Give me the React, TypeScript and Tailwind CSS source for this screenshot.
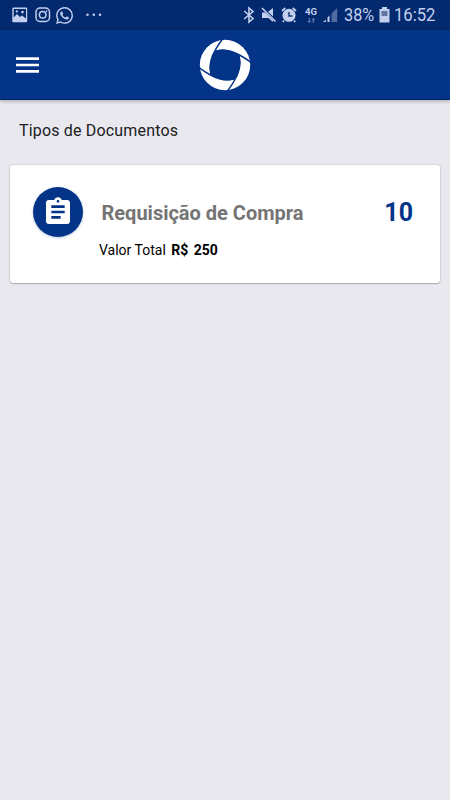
import React from "react";

function StatusBar() {
  return (
    <div className="flex h-[30px] items-center bg-[#032a6f] pl-[12px] text-[#c3cfee]">
      <svg className="h-[16px] w-[16px]" viewBox="0 0 16 16">
        <path fill="currentColor" fillRule="evenodd" d="M1.500 .5H14a1.200 1.200 0 0 1 1.200 1.200V14a1.200 1.200 0 0 1-1.200 1.200H1.500A1.200 1.200 0 0 1 .3 14V1.700A1.200 1.200 0 0 1 1.500.5ZM1.700 2v8.500l3.300-3.500 3 3 2-1.500 4 3V2ZM4.800 3.300a1.100 1.100 0 1 1 0 2.200a1.100 1.100 0 0 1 0-2.200ZM10.500 3.800a1.300 1.300 0 1 1 0 2.600a1.300 1.300 0 0 1 0-2.600Z" />
      </svg>
      <svg className="ml-[7px] h-[16px] w-[16px]" viewBox="0 0 16 16" fill="none" stroke="currentColor" strokeWidth="1.500">
        <rect x="1" y="1" width="13.500" height="13.500" rx="4" />
        <circle cx="7.700" cy="7.800" r="3.300" />
        <circle cx="11.600" cy="4" r=".5" fill="currentColor" strokeWidth=".8" />
      </svg>
      <svg className="ml-[5px] h-[17px] w-[17px]" viewBox="0 0 24 24" fill="currentColor">
        <path d="M17.472 14.382c-.297-.149-1.758-.867-2.030-.967-.273-.099-.471-.148-.670.150-.197.297-.767.966-.940 1.164-.173.199-.347.223-.644.075-.297-.150-1.255-.463-2.390-1.475-.883-.788-1.480-1.761-1.653-2.059-.173-.297-.018-.458.130-.606.134-.133.298-.347.446-.520.149-.174.198-.298.298-.497.099-.198.050-.371-.025-.520-.075-.149-.669-1.612-.916-2.207-.242-.579-.487-.500-.669-.510-.173-.008-.371-.010-.570-.010-.198 0-.520.074-.792.372-.272.297-1.040 1.016-1.040 2.479 0 1.462 1.065 2.875 1.213 3.074.149.198 2.096 3.200 5.077 4.487.709.306 1.262.489 1.694.625.712.227 1.360.195 1.871.118.571-.085 1.758-.719 2.006-1.413.248-.694.248-1.289.173-1.413-.074-.124-.272-.198-.570-.347m-5.421 7.403h-.004a9.870 9.870 0 0 1-5.031-1.378l-.361-.214-3.741.982.998-3.648-.235-.374a9.860 9.860 0 0 1-1.510-5.260c.001-5.450 4.436-9.884 9.888-9.884 2.640 0 5.122 1.030 6.988 2.898a9.825 9.825 0 0 1 2.893 6.994c-.003 5.450-4.437 9.884-9.885 9.884m8.413-18.297A11.815 11.815 0 0 0 12.050 0C5.495 0 .160 5.335.157 11.892c0 2.096.547 4.142 1.588 5.945L.057 24l6.305-1.654a11.882 11.882 0 0 0 5.683 1.448h.005c6.554 0 11.890-5.335 11.893-11.893a11.821 11.821 0 0 0-3.480-8.413Z" />
      </svg>
      <svg className="ml-[12px] h-[4px] w-[18px]" viewBox="0 0 18 4" fill="currentColor">
        <circle cx="2.500" cy="1.800" r="1.250" /><circle cx="8.800" cy="1.800" r="1.250" /><circle cx="15" cy="1.800" r="1.250" />
      </svg>
      <svg className="ml-[140px] h-[18px] w-[12px]" viewBox="0 0 12 18" fill="none" stroke="currentColor" strokeWidth="1.600">
        <path d="M1.200 5 10 12.500 6 16V2l4 3.500L1.200 13" />
      </svg>
      <svg className="ml-[6px] h-[16px] w-[16px]" viewBox="0 0 16 16" fill="currentColor">
        <path d="M1 5.500h3l8 7.500v2L7.500 11H1ZM12 1v8.500L7.200 4.800Z" />
        <path d="M1 1 14.500 14.500" stroke="currentColor" strokeWidth="1.600" />
      </svg>
      <svg className="ml-[4px] h-[16px] w-[16px]" viewBox="0 0 16 16">
        <circle cx="8" cy="8.300" r="6.500" fill="currentColor" />
        <path d="M1 4 4.300 1M15 4 11.700 1M3 13.500 1.800 15M13 13.500 14.200 15" stroke="currentColor" strokeWidth="1.700" />
        <path d="M8 5v4h3.500" fill="none" stroke="#173a78" strokeWidth="1.500" />
      </svg>
      <div className="ml-[8px] flex h-[15px] w-[13px] flex-col font-['Roboto',sans-serif]">
        <span className="text-[9.500px] leading-[8px] font-bold">4G</span>
        <svg className="mt-[2px] ml-[2px] h-[5px] w-[9px] text-[#7186b5]" viewBox="0 0 9 5" fill="none" stroke="currentColor" strokeWidth="1">
          <path d="M2.300 0v4.500M.8 3l1.500 1.500L3.800 3M6.300 5V.6M4.800 2 6.300.6 7.800 2" />
        </svg>
      </div>
      <svg className="ml-[4px] h-[16px] w-[16px]" viewBox="0 0 16 16">
        <path d="M1 15 3.800 12.500V15ZM5.500 10.500 7.500 8.500V15h-2Z" fill="currentColor" />
        <path d="M9.500 6.500 15.200 1v14H9.500Z" fill="#506ca1" />
      </svg>
      <span className="ml-[6px] inline-block w-[31px] origin-left scale-x-[.88] whitespace-nowrap font-['Roboto',sans-serif] text-[18.500px] leading-[18px]">38%</span>
      <svg className="ml-[4px] h-[16px] w-[11px]" viewBox="0 0 11 16">
        <path d="M3 0h5v2h2.500v13.500H.5V2H3Z" fill="currentColor" />
        <path d="M2.500 4h6v5h-6Z" fill="#6077a6" />
      </svg>
      <span className="ml-[4px] inline-block w-[42px] origin-left scale-x-[.9] whitespace-nowrap font-['Roboto',sans-serif] text-[18.500px] leading-[18px]">16:52</span>
    </div>
  );
}

const bladeAngles = [0, 90, 180, 270];

function Logo() {
  return (
    <svg className="h-[52px] w-[52px]" viewBox="-26 -26 52 52">
      <circle r="25.200" fill="#fff" />
      <path fill="#043488" d="M-9.500-14.500Q3-18.200 14.500-9.500Q18.200 3 9.500 14.500Q-3 18.200-14.500 9.500Q-18.200-3-9.500-14.500Z" />
      {bladeAngles.map((angle) => (
        <path
          key={angle}
          transform={`rotate(${angle})`}
          fill="none"
          stroke="#043488"
          strokeWidth="1.500"
          d="M-2.500-26Q-7-20-10-14.500Q-16.500-3-14 9"
        />
      ))}
    </svg>
  );
}

export default function App() {
  return (
    <div className="flex h-[800px] w-[450px] flex-col bg-[#e8e8ee] font-['Roboto',sans-serif]">
      <StatusBar />
      <header className="flex h-[70px] items-center border-b border-[#032668] bg-[#043488] pl-[16px] shadow-[0_1px_4px_rgba(0,0,0,0.3)]">
        <button className="mt-px" aria-label="Menu">
          <svg className="h-[16px] w-[23px]" viewBox="0 0 23 16" fill="#fff">
            <path d="M0 .3h23v2.600H0ZM0 6.700h23v2.600H0ZM0 13.100h23v2.600H0Z" />
          </svg>
        </button>
        <div className="mt-px ml-[160px]"><Logo /></div>
      </header>
      <main className="px-[10px] pt-[19px]">
        <h1 className="pl-[9px] text-[16px] leading-6 tracking-[.17px] text-[#202023]">Tipos de Documentos</h1>
        <section className="mt-[22px] h-[118px] rounded-[3px] bg-white pt-[22px] pr-[27px] pl-[23px] shadow-[0_0_2px_rgba(0,0,0,0.25),0_1px_1px_rgba(0,0,0,0.2)]">
          <div className="flex h-[50px] items-center">
            <div className="flex h-[50px] w-[50px] items-center justify-center rounded-full bg-[#043488] shadow-[0_1px_3px_rgba(4,52,136,0.25)]">
              <svg className="h-[32px] w-[32px]" viewBox="0 0 24 24" fill="#fff">
                <path d="M19 3h-4.180C14.400 1.840 13.300 1 12 1c-1.300 0-2.400.84-2.820 2H5c-1.100 0-2 .9-2 2v14c0 1.100.9 2 2 2h14c1.100 0 2-.9 2-2V5c0-1.100-.9-2-2-2zm-7 0c.55 0 1 .45 1 1s-.45 1-1 1-1-.45-1-1 .45-1 1-1zm2 14H7v-2h7v2zm3-4H7v-2h10v2zm0-4H7V7h10v2z" />
              </svg>
            </div>
            <h2 className="mt-[2px] ml-[18.500px] text-[20px] font-bold text-[#747474]">Requisição de Compra</h2>
            <span className="mt-px ml-auto text-[25px] font-bold text-[#043488]">10</span>
          </div>
          <p className="mt-[3px] ml-[66px] whitespace-pre text-[14px] leading-5 text-black">Valor Total <b className="ml-[2px] font-bold [word-spacing:2px]">R$ 250</b></p>
        </section>
      </main>
    </div>
  );
}
